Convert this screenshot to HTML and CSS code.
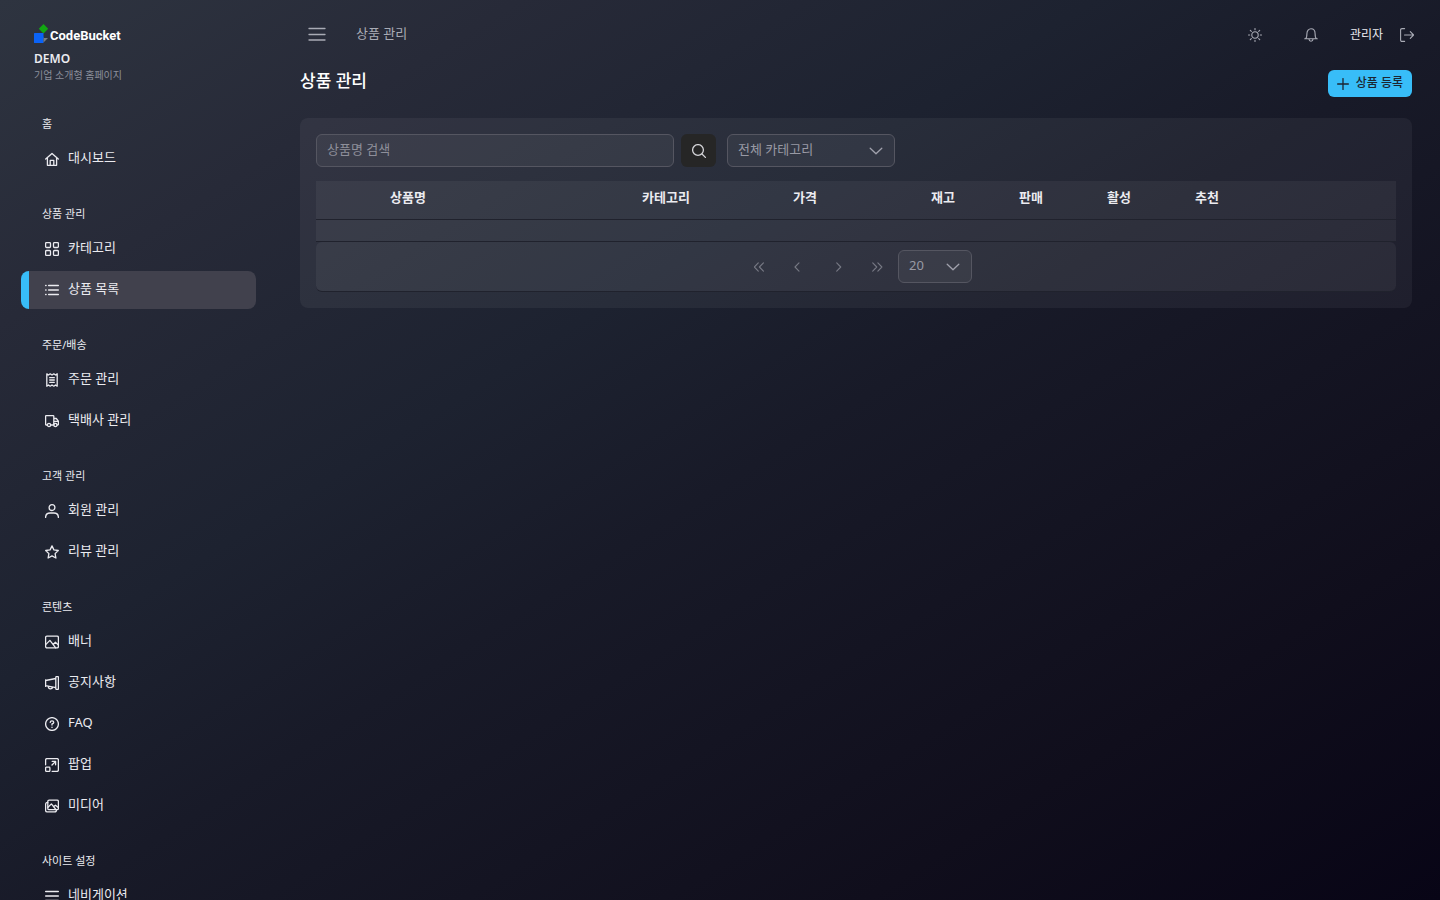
FILE: index.html
```html
<!DOCTYPE html>
<html lang="ko">
<head>
<meta charset="utf-8">
<title>상품 관리</title>
<link rel="stylesheet" href="styles.css">
</head>
<body>
<div class="layout">
  <aside class="sidebar">
    <div class="brand">
      <div class="logo">
        <svg class="logo-mark" viewBox="0 0 16 20" aria-hidden="true"><path fill="#12a612" d="M9.500 0 14.200 4.700 9.500 9.400 4.800 4.700z"/><path fill="#0b63f6" d="M0 9.500q0-.5.500-.5h5l4 4v6H.5q-.5 0-.5-.5z"/><path fill="#0b63f6" d="M5 9h4.500v5H5z"/><path fill="#777c84" d="M9.500 14H14l-4.500 4.500z"/></svg>
        <span class="logo-name">CodeBucket</span>
      </div>
      <div class="site-name">DEMO</div>
      <div class="site-desc">기업 소개형 홈페이지</div>
    </div>
    <nav class="menu">
      <section class="menu-group">
        <h2 class="menu-title">홈</h2>
        <a class="menu-link" href="#"><svg class="icon" viewBox="0 0 14 14"><path d="M.7 7 7 1.400 13.300 7M2.400 5.700v7.600h9.200V5.700M5.200 13V8.300h3.600V13"/></svg><span>대시보드</span></a>
      </section>
      <section class="menu-group">
        <h2 class="menu-title">상품 관리</h2>
        <a class="menu-link" href="#"><svg class="icon" viewBox="0 0 14 14"><rect x=".6" y=".6" width="4.900" height="4.900" rx="1"/><rect x="8.500" y=".6" width="4.900" height="4.900" rx="1"/><rect x=".6" y="8.500" width="4.900" height="4.900" rx="1"/><rect x="8.500" y="8.500" width="4.900" height="4.900" rx="1"/></svg><span>카테고리</span></a>
        <a class="menu-link active" href="#"><svg class="icon" viewBox="0 0 14 14"><path d="M3.600 2.500h9.800M3.600 7h9.800M3.600 11.500h9.800M.6 2.500h.5M.6 7h.5M.6 11.500h.5"/></svg><span>상품 목록</span></a>
      </section>
      <section class="menu-group">
        <h2 class="menu-title">주문/배송</h2>
        <a class="menu-link" href="#"><svg class="icon" viewBox="0 0 14 14"><path d="M1.800.8 3.500 2 5.200.8 7 2 8.800.8 10.500 2 12.200.8v12.400L10.500 12l-1.700 1.200L7 12l-1.800 1.200L3.500 12l-1.700 1.200zM4.700 4.700h4.600M4.700 7h4.600M4.700 9.300h4.600"/></svg><span>주문 관리</span></a>
        <a class="menu-link" href="#"><svg class="icon" viewBox="0 0 14 14"><path d="M2.300 11H1.200Q.6 11 .6 10.400V2.300q0-.7.7-.7h6.800q.7 0 .7.700V11H5.700M8.800 4.500h2.500l2.100 2.700v3.200q0 .6-.6.6h-.7M8.800 7.400h4.500"/><circle cx="4" cy="11" r="1.600"/><circle cx="10.400" cy="11" r="1.600"/></svg><span>택배사 관리</span></a>
      </section>
      <section class="menu-group">
        <h2 class="menu-title">고객 관리</h2>
        <a class="menu-link" href="#"><svg class="icon" viewBox="0 0 14 14"><circle cx="7" cy="3.600" r="2.900"/><path d="M.6 13.500c0-3 1.900-4.500 4.500-4.500h3.800c2.600 0 4.500 1.500 4.500 4.500"/></svg><span>회원 관리</span></a>
        <a class="menu-link" href="#"><svg class="icon" viewBox="0 0 14 14"><path d="m7 .9 1.900 4 4.400.6-3.200 3.100.8 4.400L7 10.900 3.100 13l.8-4.400L.7 5.500l4.400-.6z"/></svg><span>리뷰 관리</span></a>
      </section>
      <section class="menu-group">
        <h2 class="menu-title">콘텐츠</h2>
        <a class="menu-link" href="#"><svg class="icon" viewBox="0 0 14 14"><rect x=".6" y="1.100" width="12.800" height="11.800" rx="1.300"/><path d="m.7 9.600 4.200-4.200 5.800 7.400M8.200 9.500l2.200-2.200 3 2.600"/></svg><span>배너</span></a>
        <a class="menu-link" href="#"><svg class="icon" viewBox="0 0 14 14"><path d="M.6 3.800v6.600M.6 4.500l10.200-2M.6 9.600l10.200 2M10.800 1.300q0-.7.7-.7h1.200q.7 0 .7.700v11.400q0 .7-.7.700h-1.200q-.7 0-.7-.7zM3.200 10.200q.3 2.600 2.200 2.600 2 0 2.300-1.700"/></svg><span>공지사항</span></a>
        <a class="menu-link" href="#"><svg class="icon" viewBox="0 0 14 14"><circle cx="7" cy="7" r="6.400"/><path d="M5.200 5.400Q5.300 3.800 7 3.800t1.800 1.500Q8.800 6.500 7 7v1.100M7 10.200v.2"/></svg><span>FAQ</span></a>
        <a class="menu-link" href="#"><svg class="icon" viewBox="0 0 14 14"><path d="M.6 6.800V2q0-1.400 1.400-1.400h10q1.400 0 1.400 1.400v10q0 1.400-1.400 1.400H7.200M7 7l3.600-3.600M7.200 3.400h3.400v3.400"/><rect x=".6" y="9.100" width="4.300" height="4.300" rx=".8"/></svg><span>팝업</span></a>
        <a class="menu-link" href="#"><svg class="icon" viewBox="0 0 14 14"><rect x="2.800" y="1.100" width="10.600" height="9.600" rx="1.300"/><path d="M2.800 3.300q-2.200 0-2.200 2v6q0 1.600 1.600 1.600h7.300q2 0 2-2.200M3 8.200l3.400-3.300 4.500 5.600M8.600 7.700l1.800-1.500 2.900 2.300"/></svg><span>미디어</span></a>
      </section>
      <section class="menu-group">
        <h2 class="menu-title">사이트 설정</h2>
        <a class="menu-link" href="#"><svg class="icon" viewBox="0 0 14 14"><path d="M.6 2.500h12.800M.6 7h12.800M.6 11.500h12.800"/></svg><span>네비게이션</span></a>
      </section>
    </nav>
  </aside>
  <div class="content">
    <header class="topbar">
      <button class="icon-button menu-toggle" type="button" aria-label="메뉴"><svg class="icon icon-lg" viewBox="0 0 18 18"><path d="M1 3.500h16M1 9.500h16M1 15h16"/></svg></button>
      <span class="crumb">상품 관리</span>
      <div class="tools">
        <button class="icon-button" type="button" aria-label="테마"><svg class="icon icon-thin" viewBox="0 0 14 14"><circle cx="7" cy="7" r="3.200"/><path d="M7 .5v1.200M7 12.300v1.200M.5 7h1.200M12.300 7h1.200M2.300 2.300l1 1M10.700 10.700l1 1M11.700 2.300l-1 1M3.300 10.700l-1 1"/></svg></button>
        <button class="icon-button bell" type="button" aria-label="알림"><svg class="icon icon-thin" viewBox="0 0 14 14"><path d="M.7 10.700h12.600M1.500 10.700c1.200-.9 1.400-2 1.400-5 0-3 1.800-5 4.100-5s4.100 2 4.100 5c0 3 .2 4.100 1.400 5M4.900 11q.3 2.300 2.100 2.300T9.100 11"/></svg></button>
        <span class="user">관리자</span>
        <button class="icon-button logout" type="button" aria-label="로그아웃"><svg class="icon icon-thin" viewBox="0 0 14 14"><path d="M4.600 13.400H2Q.6 13.400.6 12V2Q.6.6 2 .6h2.600M4.500 7h9M10.300 3.600 13.600 7l-3.300 3.400"/></svg></button>
      </div>
    </header>
    <main>
      <div class="page-head">
        <h1 class="page-title">상품 관리</h1>
        <button class="add-button" type="button"><svg class="icon icon-sm" viewBox="0 0 12 12"><path d="M6 .6v10.800M.6 6h10.800"/></svg><span>상품 등록</span></button>
      </div>
      <section class="card">
        <form class="filters">
          <input class="field search" type="text" placeholder="상품명 검색" aria-label="상품명 검색">
          <button class="search-button" type="button" aria-label="검색"><svg class="icon" viewBox="0 0 14 14"><circle cx="6" cy="6" r="5.400"/><path d="m10 10 3.400 3.400"/></svg></button>
          <div class="select-wrap category"><select class="field" aria-label="카테고리"><option>전체 카테고리</option></select><svg class="icon chevron" viewBox="0 0 14 14"><path d="m1.200 4.200 5.800 5.600 5.800-5.600"/></svg></div>
        </form>
        <table class="grid">
          <colgroup><col class="c-thumb"><col class="c-name"><col class="c-cat"><col class="c-price"><col class="c-flag"><col class="c-flag"><col class="c-flag"><col></colgroup>
          <thead><tr><th></th><th>상품명</th><th>카테고리</th><th>가격</th><th>재고</th><th>판매</th><th>활성</th><th>추천</th></tr></thead>
          <tbody><tr><td colspan="8"></td></tr></tbody>
        </table>
        <div class="pager">
          <button class="page-button" type="button" aria-label="처음" disabled><svg class="icon icon-sm" viewBox="0 0 14 14"><path d="m5 2.200-4.700 4.800L5 11.800M11 2.200 6.300 7l4.700 4.800"/></svg></button>
          <button class="page-button" type="button" aria-label="이전" disabled><svg class="icon icon-sm" viewBox="0 0 14 14"><path d="M7 2.200 2.300 7 7 11.800"/></svg></button>
          <button class="page-button" type="button" aria-label="다음" disabled><svg class="icon icon-sm" viewBox="0 0 14 14"><path d="M5.500 2.200 10.200 7l-4.700 4.800"/></svg></button>
          <button class="page-button" type="button" aria-label="마지막" disabled><svg class="icon icon-sm" viewBox="0 0 14 14"><path d="M2 2.200 6.700 7 2 11.800M8 2.200 12.700 7 8 11.800"/></svg></button>
          <div class="select-wrap size"><select class="field" aria-label="페이지당 행 수"><option>20</option></select><svg class="icon chevron" viewBox="0 0 14 14"><path d="m1.200 4.200 5.800 5.600 5.800-5.600"/></svg></div>
        </div>
      </section>
    </main>
  </div>
</div>
</body>
</html>
```
FILE: styles.css
```css
* { box-sizing: border-box; }

body {
  margin: 0;
  height: 100vh;
  overflow: hidden;
  background: linear-gradient(to bottom right, #2e3440 0%, #272a38 18%, #1d2230 38%, #181a28 52%, #100e1c 80%, #080516 100%);
  color: #ebebf0;
  font-family: "Noto Sans", "Noto Sans CJK KR", sans-serif;
  font-size: 13px;
  line-height: 20px;
}

button, input, select { font: inherit; color: inherit; }
button { background: none; border: 0; padding: 0; }

.icon {
  width: 14px;
  height: 14px;
  flex: none;
  fill: none;
  stroke: currentColor;
  stroke-width: 1.3;
  stroke-linecap: round;
  stroke-linejoin: round;
}
.icon-lg { width: 18px; height: 18px; }
.icon-sm { width: 12px; height: 12px; }
.icon-thin { stroke-width: 1.1; }

.layout { display: flex; height: 100%; }

.sidebar { width: 272px; flex: none; padding: 24px 16px 0 21px; overflow: hidden; }
.brand { padding-left: 13px; height: 81px; }
.logo { display: flex; align-items: flex-start; height: 27px; }
.logo-mark { width: 16px; height: 20px; }
.logo-name { font-family: Roboto, sans-serif; font-size: 13px; font-weight: 700; line-height: 24px; color: #fff; }
.site-name { font-size: 12px; font-weight: 600; line-height: 16px; }
.site-desc { font-size: 10px; line-height: 16px; color: #8b8f9b; }

.menu-group { padding-top: 8px; margin-bottom: 17px; }
.menu-title { margin: 0 0 5px; padding-left: 21px; font-size: 11px; font-weight: 400; line-height: 22px; }
.menu-link {
  display: flex;
  align-items: center;
  gap: 9px;
  height: 38px;
  margin-bottom: 3px;
  padding-left: 16px;
  border-left: 8px solid transparent;
  border-radius: 8px;
  color: inherit;
  text-decoration: none;
}
.menu-link span { padding-bottom: 5px; }
.menu-link.active { background: #41414d; border-left-color: #38bdf8; }

.content { flex: 1; min-width: 0; padding: 0 28px; }
.topbar { display: flex; align-items: center; height: 68px; margin-right: -2px; color: #a9abb5; }
.menu-toggle { margin-left: 8px; }
.icon-button { display: flex; }
.crumb { margin-left: 30px; padding-bottom: 2px; }
.tools { display: flex; align-items: center; margin-left: auto; padding-top: 2px; }
.bell { margin-left: 42px; }
.user { margin-left: 32px; font-size: 12px; color: #ebebf0; }
.logout { margin-left: 17px; }

.page-head { display: flex; justify-content: space-between; align-items: flex-start; height: 50px; padding-top: 2px; }
.page-title { margin: 0; font-size: 17px; font-weight: 500; line-height: 22px; color: #fff; }
.add-button {
  display: flex;
  align-items: center;
  gap: 7px;
  height: 27px;
  padding: 0 9px;
  border-radius: 6px;
  background: #38bdf8;
  color: #1c2530;
  font-size: 12px;
  font-weight: 500;
}
.add-button span { padding-bottom: 2px; }

.card { padding: 16px; border-radius: 8px; background: rgba(255, 255, 255, .05); }
.filters { display: flex; margin-bottom: 14px; }
.field {
  width: 100%;
  height: 33px;
  padding: 0 10px 4px;
  border: 1px solid #555661;
  border-radius: 6px;
  background: rgba(255, 255, 255, .05);
  color: #9899a4;
  appearance: none;
}
.field::placeholder { color: #8e8f9a; opacity: 1; }
.search { width: 358px; }
.search-button {
  display: flex;
  align-items: center;
  justify-content: center;
  width: 35px;
  height: 33px;
  margin: 0 11px 0 7px;
  border-radius: 6px;
  background: #262626;
  color: #d4d4d8;
}
.select-wrap { position: relative; color: #a1a2ad; }
.category { width: 168px; }
.chevron { position: absolute; right: 12px; top: 10px; pointer-events: none; }

.grid { width: 100%; table-layout: fixed; border-collapse: separate; border-spacing: 0; background: rgba(255, 255, 255, .05); }
.grid th { height: 39px; padding: 0 0 6px 14px; font-weight: 600; text-align: left; border-bottom: 1px solid #20222d; }
.grid td { height: 22px; padding: 0; border-bottom: 1px solid #20222d; }

.pager {
  display: flex;
  align-items: center;
  justify-content: center;
  height: 50px;
  padding-left: 2px;
  border-bottom: 1px solid #20222d;
  border-radius: 6px;
  background: rgba(255, 255, 255, .05);
}
.page-button { display: flex; align-items: center; justify-content: center; width: 35px; height: 35px; margin-right: 4px; color: #777984; }
.size { width: 74px; }

.c-thumb { width: 60px; }
.c-name { width: 252px; }
.c-cat { width: 151px; }
.c-price { width: 138px; }
.c-flag { width: 88px; }
```
